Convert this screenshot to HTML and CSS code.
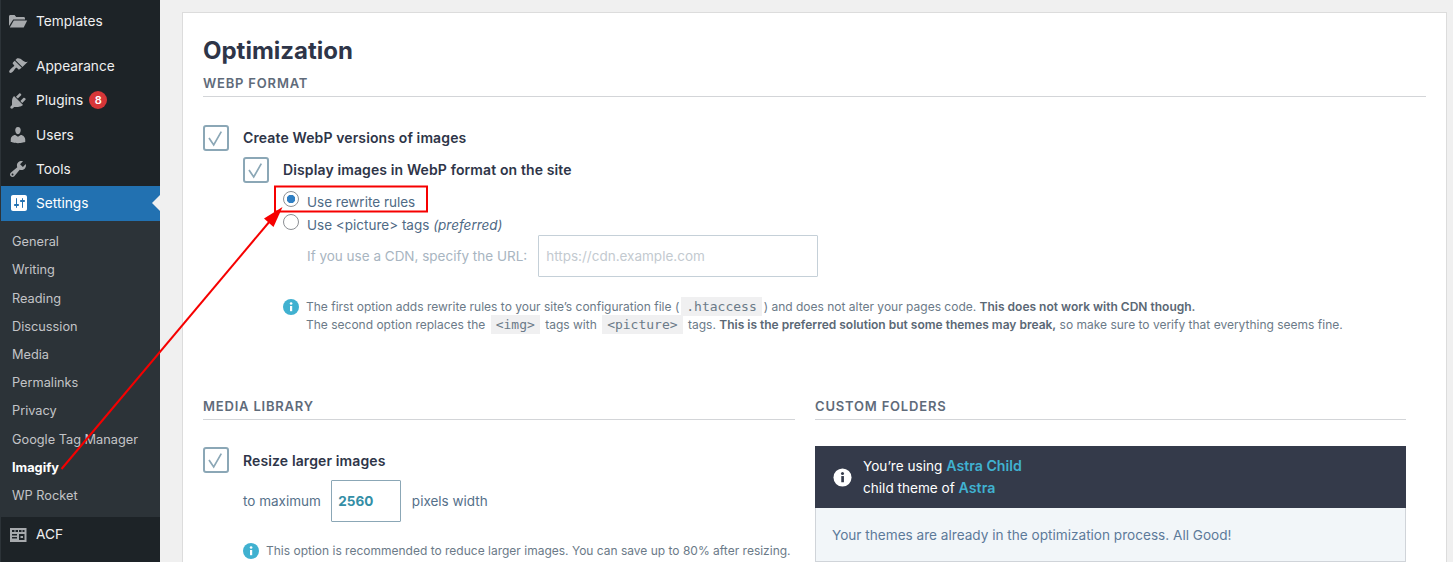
FILE: index.html
```html
<!DOCTYPE html>
<html lang="en">
<head>
<meta charset="utf-8">
<title>Imagify Optimization</title>
<link rel="stylesheet" href="styles.css">
</head>
<body>
<div class="app">
  <aside class="sidebar">
    <ul class="menu menu-top">
      <li class="item"><svg class="ico" viewBox="0 0 20 20"><path d="M1 5.500C1 4.700 1.600 4 2.400 4h4.200l1.600 2h7.400c.8 0 1.400.6 1.400 1.400V8.500H5.200L1 15z"/><path d="M5.800 9.500H19.200L15.700 16.500H1.800z"/></svg><span class="item-text">Templates</span></li>
    </ul>
    <ul class="menu menu-main">
      <li class="item"><svg class="ico" viewBox="0 0 20 20"><path d="M14.480 11.060L7.410 3.990l1.500-1.500c.5-.56 2.300-.47 3.510.32 1.210.8 1.430 1.280 2.910 2.100 1.180.64 2.450 1.260 4.450.85zm-.71.71L6.700 4.700 4.930 6.470c-.39.39-.39 1.020 0 1.410l1.060 1.060c.39.39.39 1.030 0 1.420-.6.6-1.430 1.110-2.210 1.690-.35.26-.7.53-1.010.84-1.430 1.430-2.100 2.760-1.220 3.640.88.88 2.210.2 3.630-1.220.31-.31.58-.66.84-1.010.58-.78 1.090-1.610 1.690-2.210.39-.39 1.030-.39 1.420 0l1.060 1.060c.39.39 1.020.39 1.410 0z"/></svg><span class="item-text">Appearance</span></li>
      <li class="item"><svg class="ico" viewBox="0 0 20 20"><path d="M13.110 4.360L9.870 7.600 8 5.730l3.240-3.240c.35-.34 1.050-.2 1.560.32.52.51.66 1.210.31 1.550zm-8 1.770l.91-1.120 9.010 9.010-1.190.84c-.71.71-2.630 1.160-3.820 1.160H6.140L4.900 17.260c-.59.59-1.540.59-2.120 0-.59-.58-.59-1.530 0-2.120l1.240-1.240v-3.880c0-1.130.4-3.190 1.090-3.890zm7.260 3.970l3.240-3.240c.34-.35 1.040-.21 1.550.31.52.51.66 1.210.31 1.550l-3.240 3.250z"/></svg><span class="item-text">Plugins</span><span class="badge">8</span></li>
      <li class="item item-users"><svg class="ico" viewBox="0 0 20 20"><path d="M10 9.250c-2.270 0-2.730-3.440-2.730-3.440C7 4.020 7.820 2 9.970 2c2.160 0 2.980 2.020 2.710 3.810 0 0-.41 3.440-2.680 3.440zm0 2.570L12.720 10c2.390 0 4.520 2.330 4.520 4.530v2.490s-3.650 1.130-7.240 1.130c-3.650 0-7.240-1.130-7.240-1.130v-2.490c0-2.250 1.940-4.480 4.470-4.480z"/></svg><span class="item-text">Users</span></li>
      <li class="item"><svg class="ico" viewBox="0 0 20 20"><path d="M16.680 9.770c-1.340 1.340-3.300 1.670-4.950.99l-5.410 6.520c-.99.99-2.590.99-3.580 0s-.99-2.590 0-3.570l6.520-5.420c-.68-1.650-.35-3.610.99-4.950 1.280-1.280 3.120-1.620 4.720-1.060l-2.890 2.890 2.820 2.820 2.860-2.870c.53 1.580.18 3.390-1.080 4.670zM3.810 16.210c.4.39 1.040.39 1.430 0 .4-.4.4-1.040 0-1.430-.39-.4-1.030-.4-1.430 0-.39.39-.39 1.030 0 1.430z"/></svg><span class="item-text">Tools</span></li>
      <li class="item item-active"><svg class="ico" viewBox="0 0 20 20"><path d="M18 16V4c0-1.100-.9-2-2-2H4c-1.100 0-2 .9-2 2v12c0 1.100.9 2 2 2h12c1.100 0 2-.9 2-2zM8 11h1c.55 0 1 .45 1 1s-.45 1-1 1H8v1.500c0 .28-.22.5-.5.5s-.5-.22-.5-.5V13H6c-.55 0-1-.45-1-1s.45-1 1-1h1V5.500c0-.28.22-.5.5-.5s.5.22.5.5V11zm5-2h-1c-.55 0-1-.45-1-1s.45-1 1-1h1V5.500c0-.28.22-.5.5-.5s.5.22.5.5V7h1c.55 0 1 .45 1 1s-.45 1-1 1h-1v5.500c0 .28-.22.5-.5.5s-.5-.22-.5-.5V9z"/></svg><span class="item-text">Settings</span></li>
    </ul>
    <ul class="submenu">
      <li>General</li>
      <li>Writing</li>
      <li class="sub-nudge">Reading</li>
      <li>Discussion</li>
      <li>Media</li>
      <li>Permalinks</li>
      <li>Privacy</li>
      <li class="sub-nudge">Google Tag Manager</li>
      <li class="sub-current">Imagify</li>
      <li>WP Rocket</li>
    </ul>
    <ul class="menu">
      <li class="item item-acf"><svg class="ico" viewBox="0 0 20 20"><path fill-rule="evenodd" d="M2 3h16.500v14H2zM4 5v2h2.500V5zm3.500 0v2h2.500V5zm3.500 0v2h2.500V5zm3.500 0v2h2V5zM4 9v1.500h5V9zm0 3v1.500h5V12zm7-3v6h5.500V9zm1.500 2h2.500v2h-2.500z"/></svg><span class="item-text">ACF</span></li>
      <li class="item"><svg class="ico" viewBox="0 0 20 20"><rect x="2" y="3" width="16" height="14" rx="1"/></svg></li>
    </ul>
  </aside>

  <main class="main">
    <section class="card">
      <h1 class="title">Optimization</h1>
      <h2 class="section-head">WEBP FORMAT</h2>

      <div class="check-row check-first">
        <span class="check"><svg viewBox="0 0 22 22"><path d="M4 11l4.700 7L16.300 4.700"/></svg></span>
        <span class="check-label">Create WebP versions of images</span>
      </div>
      <div class="nested">
        <div class="check-row check-second">
          <span class="check"><svg viewBox="0 0 22 22"><path d="M4 11l4.700 7L16.300 4.700"/></svg></span>
          <span class="check-label">Display images in WebP format on the site</span>
        </div>
        <div class="radios">
          <div class="radio-row"><span class="radio radio-on"></span><span>Use rewrite rules</span></div>
          <div class="radio-row"><span class="radio"></span><span>Use &lt;picture&gt; tags <em>(preferred)</em></span></div>
          <div class="cdn-row">
            <span class="cdn-label">If you use a CDN, specify the URL:</span>
            <input class="cdn-input" type="text" placeholder="https://cdn.example.com">
          </div>
        </div>
        <div class="note note-webp">
          <svg class="info" viewBox="0 0 16 16"><circle cx="8" cy="8" r="8"/><rect x="7" y="7" width="2.200" height="5.200" fill="#fff"/><circle cx="8.100" cy="4.500" r="1.300" fill="#fff"/></svg>
          <p class="note-text">The first option adds rewrite rules to your site’s configuration file (<code>.htaccess</code>) and does not alter your pages code. <strong>This does not work with CDN though.</strong><br>The second option replaces the <code>&lt;img&gt;</code> tags with <code>&lt;picture&gt;</code> tags. <strong>This is the preferred solution but some themes may break,</strong> so make sure to verify that everything seems fine.</p>
        </div>
      </div>

      <div class="columns">
        <div class="col">
          <h2 class="section-head">MEDIA LIBRARY</h2>
          <div class="check-row check-media">
            <span class="check"><svg viewBox="0 0 22 22"><path d="M4 11l4.700 7L16.300 4.700"/></svg></span>
            <span class="check-label">Resize larger images</span>
          </div>
          <div class="resize-row">
            <span>to maximum</span>
            <input class="num-input" type="text" value="2560">
            <span>pixels width</span>
          </div>
          <div class="note note-media">
            <svg class="info" viewBox="0 0 16 16"><circle cx="8" cy="8" r="8"/><rect x="7" y="7" width="2.200" height="5.200" fill="#fff"/><circle cx="8.100" cy="4.500" r="1.300" fill="#fff"/></svg>
            <p class="note-text">This option is recommended to reduce larger images. You can save up to 80% after resizing.</p>
          </div>
        </div>
        <div class="col">
          <h2 class="section-head">CUSTOM FOLDERS</h2>
          <div class="panel">
            <div class="panel-dark">
              <svg class="panel-icon" viewBox="0 0 20 20"><circle cx="10" cy="10" r="9.500" fill="#fff"/><rect x="8.700" y="8.500" width="2.800" height="6.500" fill="#343a4a"/><circle cx="10" cy="5.700" r="1.600" fill="#343a4a"/></svg>
              <p class="panel-text">You’re using <b>Astra Child</b><br>child theme of <b>Astra</b></p>
            </div>
            <div class="panel-light">Your themes are already in the optimization process. All Good!</div>
          </div>
        </div>
      </div>
    </section>
  </main>

  <svg class="annotation" viewBox="0 0 1453 562" aria-hidden="true">
    <rect x="275" y="186.500" width="152" height="25" fill="none" stroke="#f60000" stroke-width="2"/>
    <path d="M61.500 469L270 221" fill="none" stroke="#f60000" stroke-width="2"/>
    <path d="M282.500 207L264 218.500 273.500 227z" fill="#f60000"/>
  </svg>
</div>
</body>
</html>
```

FILE: styles.css
```css
* { box-sizing: border-box; }

html, body {
  margin: 0;
  height: 562px;
  overflow: hidden;
}

body {
  background: #f0f0f0;
  font-family: Inter, "Liberation Sans", sans-serif;
  font-size: 14px;
  color: #2e3548;
}

ul { list-style: none; margin: 0; padding: 0; }
p, h1, h2 { margin: 0; }

.app {
  position: relative;
  display: flex;
  width: 1453px;
  height: 562px;
  overflow: hidden;
}

/* Sidebar */
.sidebar {
  flex: 0 0 160px;
  height: 562px;
  overflow: hidden;
  background: #1d2327;
  border-left: 1px solid #2c3338;
  color: #f0f0f1;
}

.menu-top { padding-top: 4px; }
.menu-main { padding-top: 11px; }

.item {
  position: relative;
  display: flex;
  align-items: center;
  height: 34.25px;
  padding-left: 7px;
  font-size: 13.7px;
  white-space: nowrap;
}

.item-text { margin-top: -1px; }
.item-users .item-text { margin-top: 1px; }

.ico {
  flex: none;
  width: 20px;
  height: 20px;
  margin-right: 8px;
  fill: #a7aaad;
}

.item-active {
  background: #2271b1;
  color: #fff;
  margin-left: -1px;
  padding-left: 9px;
}
.item-active .ico { fill: #fff; margin-right: 7px; }
.item-active::after {
  content: "";
  position: absolute;
  right: 0;
  top: 50%;
  margin-top: -8px;
  border: 8px solid transparent;
  border-right-color: #f0f0f0;
  border-left-width: 0;
}

.badge {
  width: 18px;
  height: 18px;
  margin-top: -2px;
  margin-left: 6px;
  border-radius: 50%;
  background: #d63638;
  color: #fff;
  font-size: 11px;
  font-weight: 600;
  line-height: 18px;
  text-align: center;
}

.submenu {
  background: #2c3338;
  padding: 7.500px 0 7.500px 11px;
  font-size: 12.750px;
  color: #c3c4c7;
}
.submenu li {
  height: 28.2px;
  line-height: 28.2px;
  white-space: nowrap;
}
.submenu .sub-nudge { line-height: 30px; }
.submenu .sub-current { color: #fff; font-weight: 700; }

/* Main card */
.main {
  flex: 1;
  padding: 12px 6px 0 22px;
}

.card {
  height: 560px;
  padding: 21px 20px 0;
  background: #fff;
  border: 1px solid #dcdcdc;
}

.title {
  font-size: 24px;
  font-weight: 700;
  line-height: 34px;
  color: #2e3548;
}

.section-head {
  margin-top: 7px;
  padding-bottom: 5px;
  border-bottom: 1px solid #d3d5d8;
  font-size: 13px;
  font-weight: 600;
  line-height: 16px;
  letter-spacing: .8px;
  color: #5f6b7a;
}

.check-row { display: flex; align-items: center; gap: 14px; }
.check-first { margin-top: 28px; }
.check-second { margin-top: 6px; }
.check-media { margin-top: 27px; }

.check {
  flex: none;
  width: 26px;
  height: 26px;
  border: 2px solid #8ba7b6;
  border-radius: 3px;
  background: #fff;
}
.check svg {
  display: block;
  width: 22px;
  height: 22px;
  fill: none;
  stroke: #8ba7b6;
  stroke-width: 1.700;
}

.check-label {
  margin-top: -2px;
  font-weight: 600;
  letter-spacing: .12px;
  color: #2e3548;
}
.check-media .check-label { margin-top: 0; }

.nested { margin-left: 40px; }

.radios { margin-top: 8px; margin-left: 40px; font-size: 13.500px; color: #4f6a85; }

.radio-row {
  display: flex;
  align-items: flex-start;
  gap: 8px;
  height: 23px;
  line-height: 23px;
}

.radio {
  flex: none;
  width: 16px;
  height: 16px;
  border: 1px solid #8c8f94;
  border-radius: 50%;
  background: #fff;
}
.radio-on {
  background: radial-gradient(circle, #2f7fc4 0 4px, #fff 4.500px);
}

.cdn-row {
  display: flex;
  align-items: center;
  gap: 11px;
  margin-top: -2px;
  margin-left: 24px;
}
.cdn-label { color: #a8b5c1; }

.cdn-input {
  width: 280px;
  height: 42px;
  padding: 0 7px;
  border: 1px solid #c5d0d8;
  border-radius: 1px;
  background: #fff;
  font: 13.500px Inter, "Liberation Sans", sans-serif;
}
.cdn-input::placeholder { color: #c3cad0; }

.note { display: flex; gap: 7px; color: #6b7a88; }
.note-webp { margin-top: 21px; margin-left: 40px; }
.note-media { margin-top: 20px; margin-left: 40px; }

.info { flex: none; width: 16px; height: 16px; margin-top: 1px; fill: #40b1d0; }

.note-text {
  font-size: 12px;
  line-height: 18px;
  white-space: nowrap;
}
.note-text strong { font-weight: 600; color: #5b6875; }
.note-text code {
  margin: 0 2px;
  padding: 2px 5px;
  background: #f0f0f1;
  font-family: "DejaVu Sans Mono", "Liberation Mono", monospace;
  font-size: 13px;
}

.columns {
  display: grid;
  grid-template-columns: 592px 591px;
  gap: 20px;
  margin-top: 57px;
}

.resize-row {
  display: flex;
  align-items: center;
  gap: 10.500px;
  margin-top: 7px;
  margin-left: 40px;
  font-size: 13.500px;
  color: #55708a;
}

.num-input {
  width: 70px;
  height: 42px;
  padding: 0 6px;
  border: 1px solid #8ba7b6;
  border-radius: 1px;
  background: #fff;
  color: #338ea6;
  font: 700 13.500px Inter, "Liberation Sans", sans-serif;
}

.panel { margin-top: 26px; }

.panel-dark {
  display: flex;
  align-items: center;
  gap: 11px;
  height: 62px;
  padding-left: 18px;
  background: #343a4a;
  color: #fff;
}
.panel-icon { flex: none; width: 19px; height: 19px; }
.panel-text { font-size: 13.600px; line-height: 21px; }
.panel-text b { font-size: 14.200px; font-weight: 600; color: #40b1d0; }

.panel-light {
  height: 54px;
  padding-left: 16px;
  border: 1px solid #d0d4d9;
  border-top: 0;
  background: #f2f6f9;
  color: #5d7a99;
  font-size: 13.600px;
  line-height: 54px;
}

/* Annotation drawn over the screenshot */
.annotation {
  position: absolute;
  left: 0;
  top: 0;
  width: 1453px;
  height: 562px;
  pointer-events: none;
}
```
